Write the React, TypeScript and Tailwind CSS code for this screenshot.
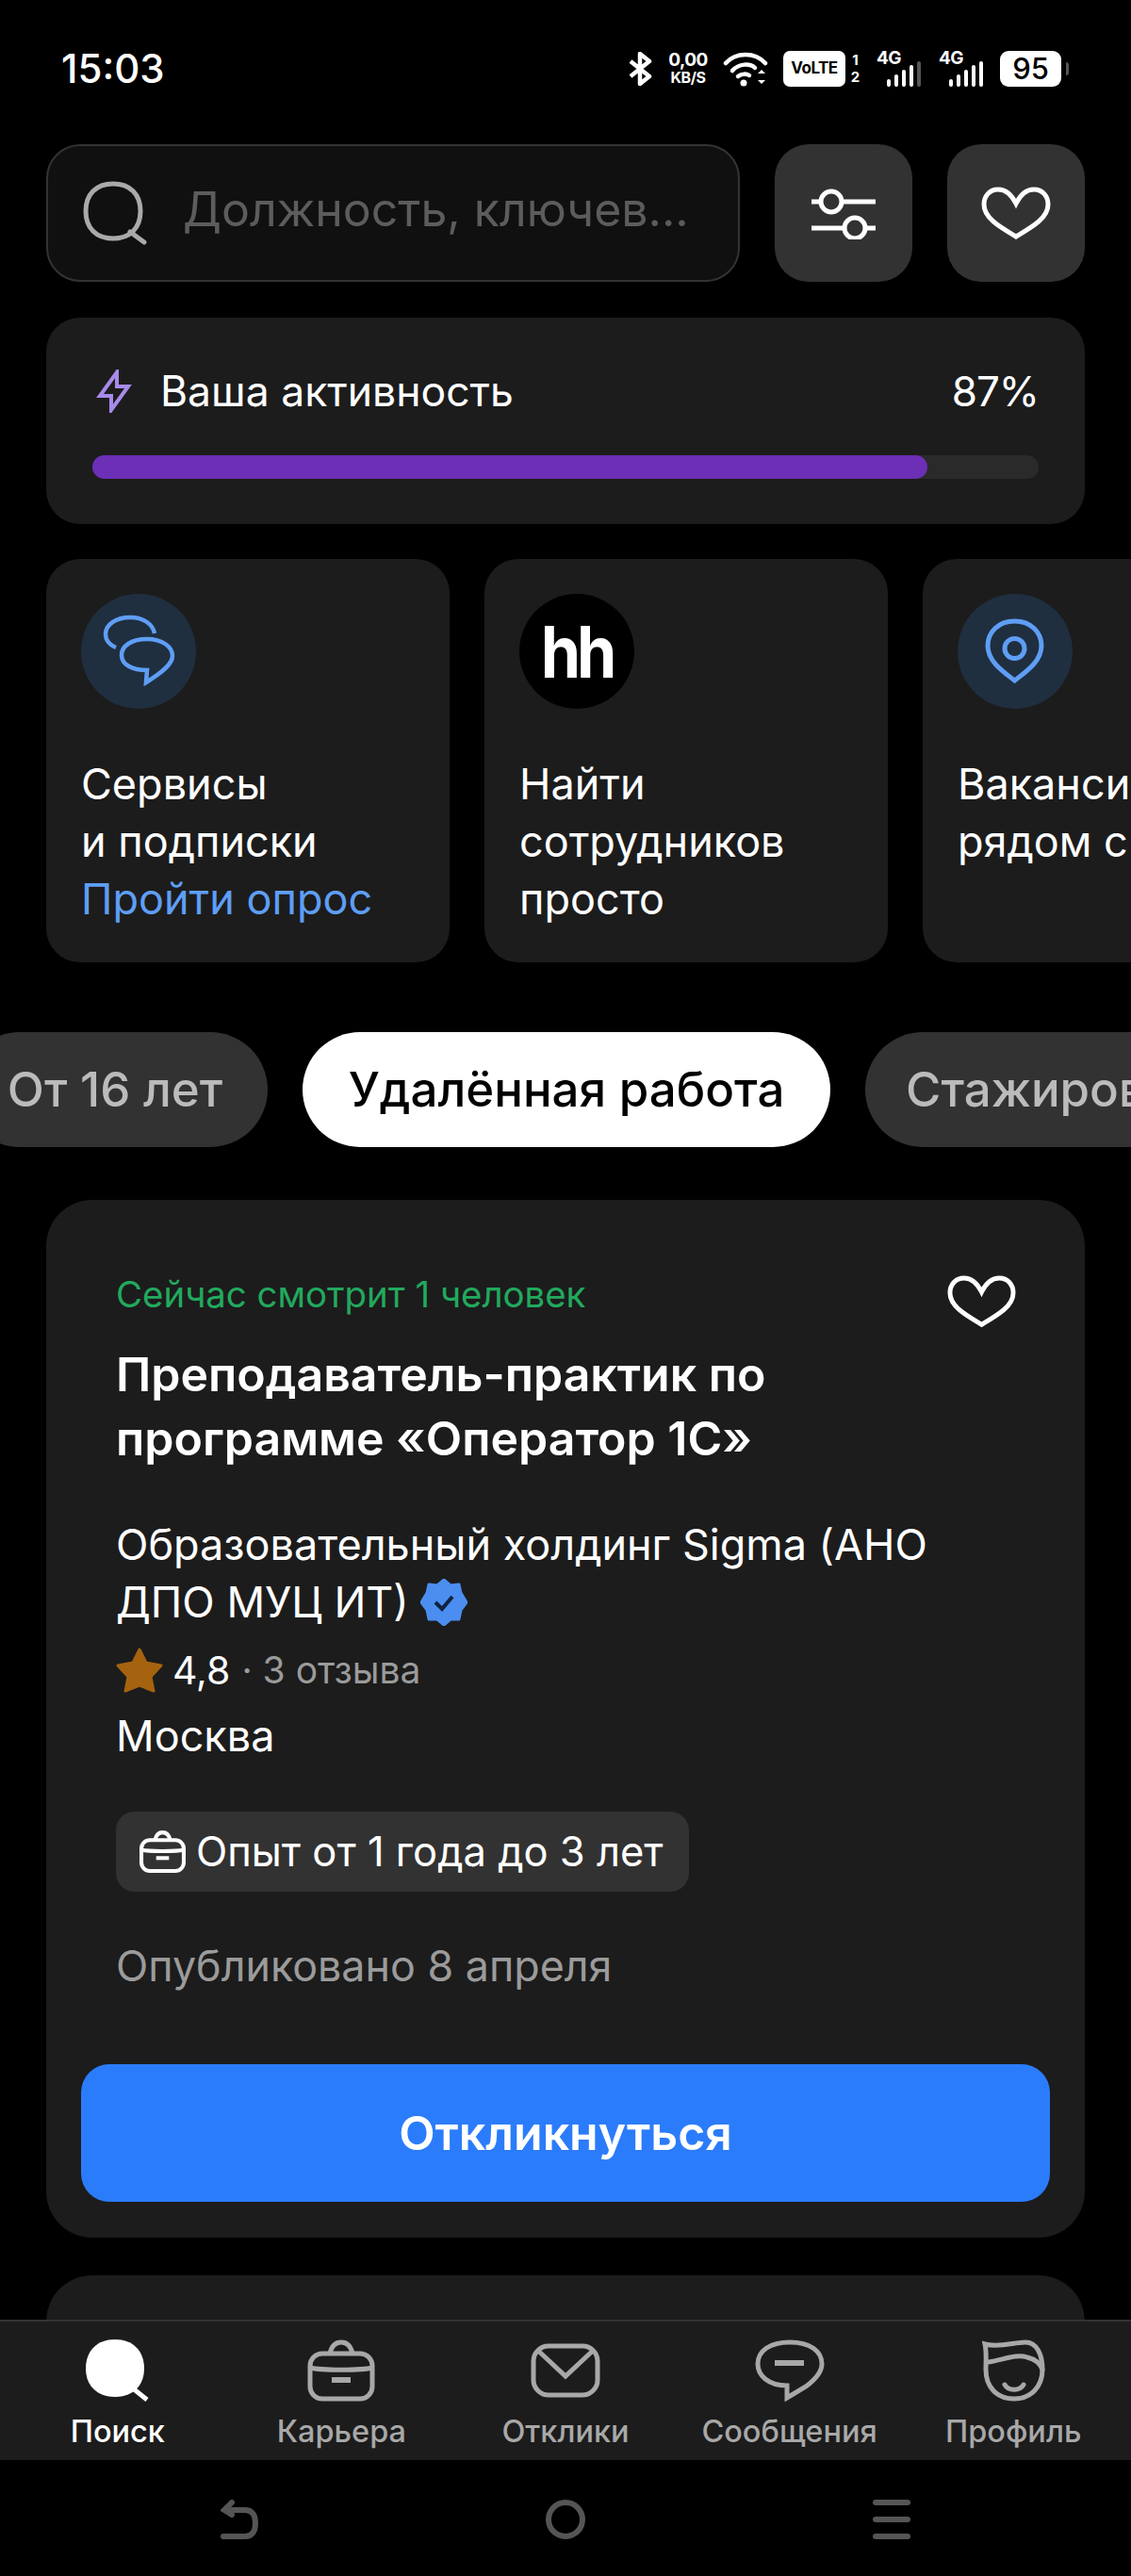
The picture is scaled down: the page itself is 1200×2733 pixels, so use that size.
const FONT = "font-['Inter','Noto_Sans',sans-serif]";

function Bluetooth() {
  return (
    <svg width="27" height="36" viewBox="0 0 27 36" fill="none" stroke="#fff" strokeWidth="4.5">
      <path d="M3 10 L23 26 L13 34 V2 L23 10 L3 26" strokeLinejoin="round" />
    </svg>
  );
}

function Wifi() {
  return (
    <svg width="48" height="38" viewBox="0 0 48 38" fill="none" stroke="#fff" strokeWidth="4.5" strokeLinecap="round">
      <path d="M3 13 C14 1 34 1 45 13" />
      <path d="M10 21 C17 13 29 13 34 18" />
      <path d="M16 27 C20 24 25 24 28 26" />
      <circle cx="22" cy="34" r="3.5" fill="#fff" stroke="none" />
      <path d="M37 24 L41 20 L45 24 Z M37 31 L41 35 L45 31 Z" fill="#fff" stroke="none" />
    </svg>
  );
}

function Signal({ dim }: { dim?: boolean }) {
  return (
    <div className="relative h-[38px] w-[47px]">
      <span className="absolute left-0 top-[-2px] text-[19px] font-bold leading-[20px] tracking-[-0.5px] text-white">4G</span>
      <div className="absolute bottom-0 right-0 flex items-end gap-[4px]">
        <i className="block h-[8px] w-[4px] rounded-full bg-white" />
        <i className="block h-[13px] w-[4px] rounded-full bg-white" />
        <i className="block h-[18px] w-[4px] rounded-full bg-white" />
        <i className="block h-[23px] w-[4px] rounded-full bg-white" />
        <i className={`block h-[27px] w-[4px] rounded-full ${dim ? "bg-[#555]" : "bg-white"}`} />
      </div>
    </div>
  );
}

function StatusBar() {
  return (
    <div className="flex h-[153px] items-start justify-between pl-[65px] pr-[66px] pt-[54px]">
      <span className="text-[42px] font-medium leading-[38px] text-white">15:03</span>
      <div className="flex items-center text-white">
        <Bluetooth />
        <div className="ml-[15px] flex w-[44px] flex-col items-center text-[19px] font-bold leading-[19px] tracking-[-0.5px]">
          <span>0,00</span>
          <span className="text-[16px]">KB/S</span>
        </div>
        <div className="ml-[15px]">
          <Wifi />
        </div>
        <div className="ml-[16px] flex h-[38px] w-[66px] items-center justify-center rounded-[7px] bg-white text-[17px] font-bold tracking-[-0.5px] text-black">
          VoLTE
        </div>
        <div className="ml-[5px] flex w-[11px] flex-col items-center text-[15px] font-bold leading-[18px]">
          <span>1</span>
          <span>2</span>
        </div>
        <div className="ml-[17px]">
          <Signal dim />
        </div>
        <div className="ml-[19px]">
          <Signal />
        </div>
        <div className="ml-[18px] flex h-[38px] w-[65px] items-center justify-center rounded-[9px] bg-white text-[31px] font-medium text-black">
          95
        </div>
        <div className="ml-[5px] h-[14px] w-[3px] rounded-r bg-[#555]" />
      </div>
    </div>
  );
}

function SearchRow() {
  return (
    <div className="flex gap-[37px] px-[49px]">
      <div className="flex h-[146px] w-[736px] min-w-0 items-center rounded-[36px] border-2 border-[#333] bg-[#101010] pl-[37px]">
        <svg width="70" height="68" viewBox="0 0 70 68" fill="none" stroke="#aaa" strokeWidth="5" strokeLinecap="round" className="shrink-0">
          <path d="M32 3 C50 3 61 14 61 32 C61 50 50 61 32 61 C14 61 3 50 3 32 C3 14 14 3 32 3 Z" />
          <path d="M50 54 L65 65" />
        </svg>
        <span className="ml-[36px] pb-[8px] text-[50px] leading-none whitespace-nowrap text-[#5c5c5c]">Должность, ключев...</span>
      </div>
      <div className="flex h-[146px] w-[146px] items-center justify-center rounded-[36px] bg-[#323232]">
        <svg width="68" height="56" viewBox="0 0 68 56" fill="none" stroke="#fff" strokeWidth="5">
          <path d="M0 16 H10 M33 16 H68 M0 44 H35 M58 44 H68" />
          <circle cx="21" cy="16" r="11" />
          <circle cx="46" cy="44" r="11" />
        </svg>
      </div>
      <div className="flex h-[146px] w-[146px] items-center justify-center rounded-[36px] bg-[#323232]">
        <Heart size={74} />
      </div>
    </div>
  );
}

function Heart({ size }: { size: number }) {
  return (
    <svg width={size} height={(size * 56) / 74} viewBox="0 0 74 56" fill="none" stroke="#fff" strokeWidth="5" strokeLinejoin="miter">
      <path d="M37 18 C32 8 26 3 18 3 C9 3 3 10 3 19 C3 34 22 44 37 53 C52 44 71 34 71 19 C71 10 65 3 56 3 C48 3 42 8 37 18 Z" />
    </svg>
  );
}

function Activity() {
  return (
    <div className="mx-[49px] mt-[38px] h-[219px] rounded-[36px] bg-[#1c1c1c] px-[49px] pt-[55px]">
      <div className="flex items-center">
        <svg width="38" height="46" viewBox="0 0 38 46" fill="none" stroke="#a78bea" strokeWidth="4" strokeLinejoin="miter" className="ml-[4px]">
          <path d="M22 3 L4 28 H16 L16 43 L34 18 H22 Z" />
        </svg>
        <span className="ml-[30px] text-[44.5px] leading-[46px] text-white">Ваша активность</span>
        <span className="ml-auto text-[44px] leading-[46px] tracking-[-1px] text-white">87%</span>
      </div>
      <div className="mt-[45px] h-[25px] rounded-full bg-[#2a2a2a]">
        <div className="h-full rounded-full bg-[#6c2fb5]" style={{ width: "88.2%" }} />
      </div>
    </div>
  );
}

function ServiceCard({ icon, lines, link }: { icon: React.ReactNode; lines: string[]; link?: string }) {
  return (
    <div className="h-[428px] w-[428px] shrink-0 rounded-[36px] bg-[#1c1c1c] pl-[37px] pt-[37px]">
      <div className="h-[122px] w-[122px]">{icon}</div>
      <div className="mt-[49px] text-[45px] leading-[61px] whitespace-nowrap text-white">
        {lines.map((l) => (
          <div key={l}>{l}</div>
        ))}
        {link && <div className="text-[#5e9ef5]">{link}</div>}
      </div>
    </div>
  );
}

function Services() {
  return (
    <div className="mt-[37px] flex gap-[37px] pl-[49px]">
      <ServiceCard
        lines={["Сервисы", "и подписки"]}
        link="Пройти опрос"
        icon={
          <svg width="122" height="122" viewBox="0 0 122 122" fill="none" stroke="#5f9ef5" strokeWidth="4.5" className="rounded-full bg-[#1f2f40]">
            <path d="M37 57 C30 54 26 49 26 43 C26 32 38 25 52 25 C66 25 76 32 78 42" />
            <path d="M70 48 C86 48 97 56 97 66 C97 75 85 84 69 94 L70 81 C54 81 43 75 43 65 C43 55 54 48 70 48 Z" />
          </svg>
        }
      />
      <ServiceCard
        lines={["Найти", "сотрудников", "просто"]}
        icon={
          <div className="flex h-[122px] w-[122px] items-center justify-center rounded-full bg-black text-[68px] font-bold tracking-[-4px] text-white">
            <span className="inline-block scale-y-[1.12]">hh</span>
          </div>
        }
      />
      <ServiceCard
        lines={["Вакансии", "рядом с вами"]}
        icon={
          <svg width="122" height="122" viewBox="0 0 122 122" fill="none" stroke="#5f9ef5" strokeWidth="5" className="rounded-full bg-[#1f2f40]">
            <path d="M60.5 29 C78 29 89 41 89 55 C89 72 72 83 60.5 92 C49 83 32 72 32 55 C32 41 43 29 60.5 29 Z" />
            <circle cx="60.5" cy="58" r="10.5" />
          </svg>
        }
      />
    </div>
  );
}

function Chips() {
  return (
    <div className="mt-[74px] -ml-[40px] flex gap-[37px] text-[51px] font-medium whitespace-nowrap">
      <div className="flex h-[122px] w-[324px] shrink-0 items-center justify-center rounded-full bg-[#323232] text-[#bbbbbb]">От 16 лет</div>
      <div className="flex h-[122px] w-[560px] shrink-0 items-center justify-center rounded-full bg-white text-black">Удалённая работа</div>
      <div className="flex h-[122px] w-[400px] shrink-0 items-center justify-center rounded-full bg-[#323232] text-[#bbbbbb]">Стажировки</div>
    </div>
  );
}

function BagIcon({ color, small }: { color: string; small?: boolean }) {
  return (
    <svg width={small ? 49 : 72} height={small ? 45 : 66} viewBox="0 0 72 66" fill="none" stroke={color} strokeWidth={small ? 6 : 5}>
      <rect x="3" y="15" width="66" height="48" rx="13" />
      <path d="M3 30 C14 33 58 33 69 30" />
      <path d="M24 15 C26 6 30 3 36 3 C42 3 46 6 48 15" />
      <path d="M26 43 H46" strokeWidth="6" />
    </svg>
  );
}

function JobCard() {
  return (
    <div className="mx-[49px] mt-[56px] h-[1101px] rounded-[49px] bg-[#1c1c1c] px-[37px] pt-[78px]">
      <div className="flex items-start justify-between pl-[37px] pr-[36px]">
        <span className="text-[38.4px] leading-[44px] text-[#22a95e]">Сейчас смотрит 1 человек</span>
        <div className="mt-[2px]">
          <Heart size={73} />
        </div>
      </div>
      <div className="mt-[16px] pl-[37px] text-[50px] font-semibold leading-[68px] whitespace-nowrap text-white">
        <div>Преподаватель-практик по</div>
        <div>программе «Оператор 1С»</div>
      </div>
      <div className="mt-[48px] pl-[37px] text-[45px] leading-[61px] whitespace-nowrap text-white">
        <div>Образовательный холдинг Sigma (АНО</div>
        <div className="flex items-center">
          ДПО МУЦ ИТ)
          <svg width="50" height="50" viewBox="0 0 50 50" className="ml-[12px]">
            <path d="M25 1 L32 7 L41 6 L43 15 L49 25 L43 33 L41 43 L32 43 L25 49 L18 43 L9 43 L7 33 L1 25 L7 15 L9 6 L18 7 Z" fill="#4b8ef0" stroke="#4b8ef0" strokeWidth="3" strokeLinejoin="round" />
            <path d="M16 25 L23 32 L34 19" fill="none" stroke="#10233f" strokeWidth="4" />
          </svg>
        </div>
      </div>
      <div className="mt-[18px] flex items-center pl-[37px]">
        <svg width="50" height="48" viewBox="0 0 50 48">
          <path d="M25 2 L32 16 L48 19 L37 31 L40 46 L25 40 L10 46 L13 31 L2 19 L18 16 Z" fill="#a5630f" stroke="#a5630f" strokeWidth="3" strokeLinejoin="round" />
        </svg>
        <span className="ml-[10px] text-[41px] leading-[48px] text-white">4,8</span>
        <span className="ml-[12px] text-[39px] leading-[48px] text-[#9b9b9b]">· 3 отзыва</span>
      </div>
      <div className="mt-[16px] pl-[37px] text-[45px] leading-[60px] text-white">Москва</div>
      <div className="mt-[50px] ml-[37px] flex h-[85px] w-[608px] items-center rounded-[20px] bg-[#323232] pl-[25px] text-[43.5px] whitespace-nowrap text-white">
        <BagIcon color="#fff" small />
        <span className="ml-[11px]">Опыт от 1 года до 3 лет</span>
      </div>
      <div className="mt-[49px] pl-[37px] text-[44.8px] leading-[60px] text-[#9b9b9b]">Опубликовано 8 апреля</div>
      <div className="mt-[74px] flex h-[146px] items-center justify-center rounded-[30px] bg-[#2b7cfb] text-[50px] font-semibold text-white">
        Откликнуться
      </div>
    </div>
  );
}

function NavItem({ icon, label, active }: { icon: React.ReactNode; label: string; active?: boolean }) {
  return (
    <div className="flex flex-col items-center">
      <div className="flex h-[66px] items-center">{icon}</div>
      <span className={`mt-[12px] text-[32.5px] font-medium leading-[40px] whitespace-nowrap ${active ? "text-white" : "text-[#a8a8a8]"}`}>{label}</span>
    </div>
  );
}

function BottomNav() {
  const c = "#a8a8a8";
  return (
    <div className="grid h-[149px] shrink-0 grid-cols-5 border-t-2 border-[#333] bg-[#1c1c1c] pl-[6px] pr-[6px] pt-[19px]">
      <NavItem
        active
        label="Поиск"
        icon={
          <svg width="68" height="66" viewBox="0 0 68 66">
            <path d="M31 0 C50 0 62 12 62 31 C62 49 50 61 31 61 C12 61 0 49 0 31 C0 12 12 0 31 0 Z" fill="#fff" />
            <path d="M50 52 L65 64" stroke="#fff" strokeWidth="5" />
          </svg>
        }
      />
      <NavItem label="Карьера" icon={<BagIcon color={c} />} />
      <NavItem
        label="Отклики"
        icon={
          <svg width="74" height="58" viewBox="0 0 74 58" fill="none" stroke={c} strokeWidth="5">
            <rect x="3" y="3" width="68" height="52" rx="16" />
            <path d="M7 7 L37 35 L67 7" />
          </svg>
        }
      />
      <NavItem
        label="Сообщения"
        icon={
          <svg width="74" height="66" viewBox="0 0 74 66" fill="none" stroke={c} strokeWidth="5">
            <path d="M37 3 C58 3 71 12 71 26 C71 36 62 44 54 50 L34 62 L34 49 C14 49 3 38 3 26 C3 12 16 3 37 3 Z" />
            <path d="M21 25 H52" strokeWidth="6" />
          </svg>
        }
      />
      <NavItem
        label="Профиль"
        icon={
          <svg width="67" height="66" viewBox="0 0 67 66" fill="none" stroke={c} strokeWidth="5" strokeLinecap="round">
            <path d="M3 5 C18 9 34 3 46 3 C58 3 64 16 64 32 C64 50 52 63 34 63 C15 63 4 50 4 32 C4 22 5 14 3 5 Z" />
            <path d="M7 24 C22 22 36 15 48 19 C56 21 62 26 64 32" />
            <path d="M24 48 C28 55 40 55 44 48" />
          </svg>
        }
      />
    </div>
  );
}

function SystemNav() {
  return (
    <div className="flex flex-1 items-start justify-center gap-[305px] pt-[42px]">
      <svg width="40" height="42" viewBox="0 0 40 42" fill="none" stroke="#555" strokeWidth="6" strokeLinecap="round">
        <path d="M3 39 H26 C34 39 37 33 37 25 C37 17 34 11 26 11 H6" />
        <path d="M12 3 L4 11 L12 16" />
      </svg>
      <svg width="42" height="42" viewBox="0 0 42 42" fill="none" stroke="#555" strokeWidth="6">
        <circle cx="21" cy="21" r="18" />
      </svg>
      <div className="flex w-[40px] flex-col gap-[12px]">
        <i className="block h-[6px] rounded-full bg-[#555]" />
        <i className="block h-[6px] rounded-full bg-[#555]" />
        <i className="block h-[6px] rounded-full bg-[#555]" />
      </div>
    </div>
  );
}

export default function App() {
  return (
    <div className={`flex h-[2733px] w-[1200px] flex-col overflow-hidden bg-black ${FONT}`}>
      <div className="h-[2461px] shrink-0 overflow-hidden">
        <StatusBar />
        <SearchRow />
        <Activity />
        <Services />
        <Chips />
        <JobCard />
        <div className="mx-[49px] mt-[40px] h-[200px] rounded-t-[49px] bg-[#1c1c1c]" />
      </div>
      <BottomNav />
      <SystemNav />
    </div>
  );
}
